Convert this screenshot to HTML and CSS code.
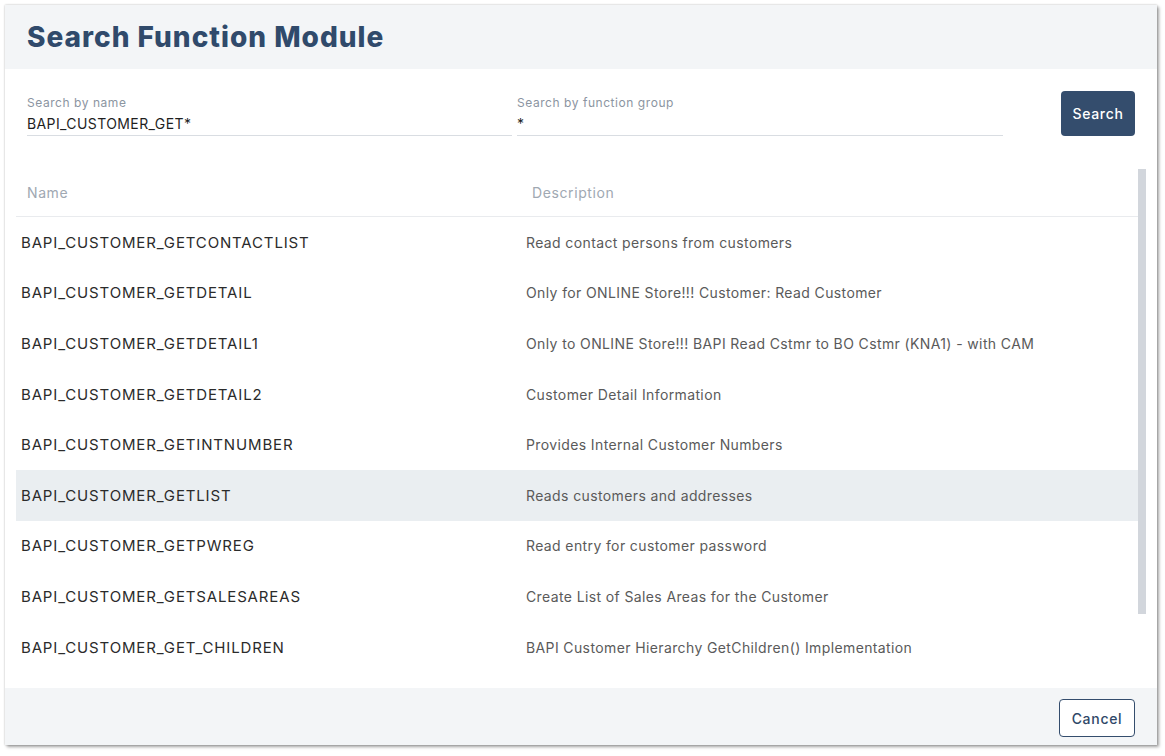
FILE: index.html
```html
<!DOCTYPE html>
<html lang="en">
<head>
<meta charset="utf-8">
<title>Search Function Module</title>
<link rel="stylesheet" href="styles.css">
</head>
<body>
<div class="page">
  <div class="dialog">
    <div class="dlg-header">
      <h1 class="dlg-title">Search Function Module</h1>
    </div>
    <div class="dlg-body">
      <div class="search-form">
        <div class="field field-name">
          <div class="field-label">Search by name</div>
          <div class="field-value">BAPI_CUSTOMER_GET*</div>
        </div>
        <div class="field field-group">
          <div class="field-label">Search by function group</div>
          <div class="field-value">*</div>
        </div>
        <button class="btn btn-primary">Search</button>
      </div>
      <div class="table-area">
        <div class="table">
          <div class="thead">
            <div class="th col-name">Name</div>
            <div class="th col-desc">Description</div>
          </div>
          <div class="row"><div class="cell cell-name">BAPI_CUSTOMER_GETCONTACTLIST</div><div class="cell cell-desc">Read contact persons from customers</div></div>
          <div class="row"><div class="cell cell-name">BAPI_CUSTOMER_GETDETAIL</div><div class="cell cell-desc">Only for ONLINE Store!!! Customer: Read Customer</div></div>
          <div class="row"><div class="cell cell-name">BAPI_CUSTOMER_GETDETAIL1</div><div class="cell cell-desc">Only to ONLINE Store!!! BAPI Read Cstmr to BO Cstmr (KNA1) - with CAM</div></div>
          <div class="row"><div class="cell cell-name">BAPI_CUSTOMER_GETDETAIL2</div><div class="cell cell-desc">Customer Detail Information</div></div>
          <div class="row"><div class="cell cell-name">BAPI_CUSTOMER_GETINTNUMBER</div><div class="cell cell-desc">Provides Internal Customer Numbers</div></div>
          <div class="row row-hover"><div class="cell cell-name">BAPI_CUSTOMER_GETLIST</div><div class="cell cell-desc">Reads customers and addresses</div></div>
          <div class="row"><div class="cell cell-name">BAPI_CUSTOMER_GETPWREG</div><div class="cell cell-desc">Read entry for customer password</div></div>
          <div class="row"><div class="cell cell-name">BAPI_CUSTOMER_GETSALESAREAS</div><div class="cell cell-desc">Create List of Sales Areas for the Customer</div></div>
          <div class="row"><div class="cell cell-name">BAPI_CUSTOMER_GET_CHILDREN</div><div class="cell cell-desc">BAPI Customer Hierarchy GetChildren() Implementation</div></div>
        </div>
        <div class="scrollbar"><div class="scroll-thumb"></div></div>
      </div>
    </div>
    <div class="dlg-footer">
      <button class="btn btn-outline">Cancel</button>
    </div>
  </div>
</div>
</body>
</html>
```

FILE: styles.css
```css
* { box-sizing: border-box; }
html, body { margin: 0; padding: 0; background: #ffffff; }
body { font-family: Inter, "Open Sans", sans-serif; color: #2d2d2d; }

.page { padding: 5px 8px 11px 5px; height: 756px; }

.dialog {
  width: 1152px;
  height: 740px;
  display: flex;
  flex-direction: column;
  background: #ffffff;
  box-shadow: 0 0 2px rgba(0,0,0,0.25), 2px 2px 3px rgba(0,0,0,0.35);
}

.dlg-header {
  height: 64px;
  background: #f3f5f7;
  display: flex;
  align-items: center;
  padding-left: 22px;
}
.dlg-title {
  margin: 0;
  font-size: 28px;
  font-weight: 800;
  color: #304a6b;
  letter-spacing: 1px;
}

.dlg-body { flex: 1; display: flex; flex-direction: column; min-height: 0; overflow: hidden; }

.search-form {
  display: flex;
  align-items: flex-start;
  padding: 22px 22px 0 22px;
}
.field { margin-top: 4px; border-bottom: 1px solid #d9dde2; }
.field-name { width: 485px; margin-right: 5px; }
.field-group { width: 486px; }
.field-label { font-size: 12px; line-height: 16px; color: #8b95a1; letter-spacing: 0.55px; }
.field-value { font-size: 14px; line-height: 22px; margin-top: 2px; color: #1f1f1f; letter-spacing: 0.4px; }

.btn {
  font-family: inherit;
  font-size: 14px;
  font-weight: 500;
  border-radius: 4px;
  cursor: pointer;
  letter-spacing: 0.7px;
}
.btn-primary {
  margin-left: 58px;
  width: 74px;
  height: 45px;
  background: #344d6d;
  color: #ffffff;
  border: none;
}

.table-area {
  flex: 1;
  min-height: 0;
  margin: 33px 11px 0 11px;
  display: flex;
}
.table { flex: 1; }
.scrollbar { width: 8px; flex: none; }
.scroll-thumb { height: 445px; background: #d2d6dc; }

.thead {
  display: flex;
  height: 48px;
  align-items: center;
  border-bottom: 1px solid #e9ebee;
}
.th { font-size: 14px; color: #a0a8b2; padding-left: 11px; letter-spacing: 0.6px; }
.col-name, .cell-name { width: 505px; flex: none; }

.row {
  display: flex;
  align-items: center;
  height: 50.6px;
}
.row-hover { background: #eaeef1; }
.cell { padding-left: 5px; }
.cell-name { font-size: 15px; color: #2b2b2b; letter-spacing: 0.85px; }
.cell-desc { font-size: 14px; color: #5a5a5a; letter-spacing: 0.38px; }

.dlg-footer {
  height: 57px;
  background: #f3f5f7;
  display: flex;
  justify-content: flex-end;
  align-items: flex-start;
  padding: 11px 22px 0 0;
}
.btn-outline {
  width: 76px;
  height: 38px;
  background: #ffffff;
  color: #2f4868;
  border: 1px solid #344d6d;
}
```
